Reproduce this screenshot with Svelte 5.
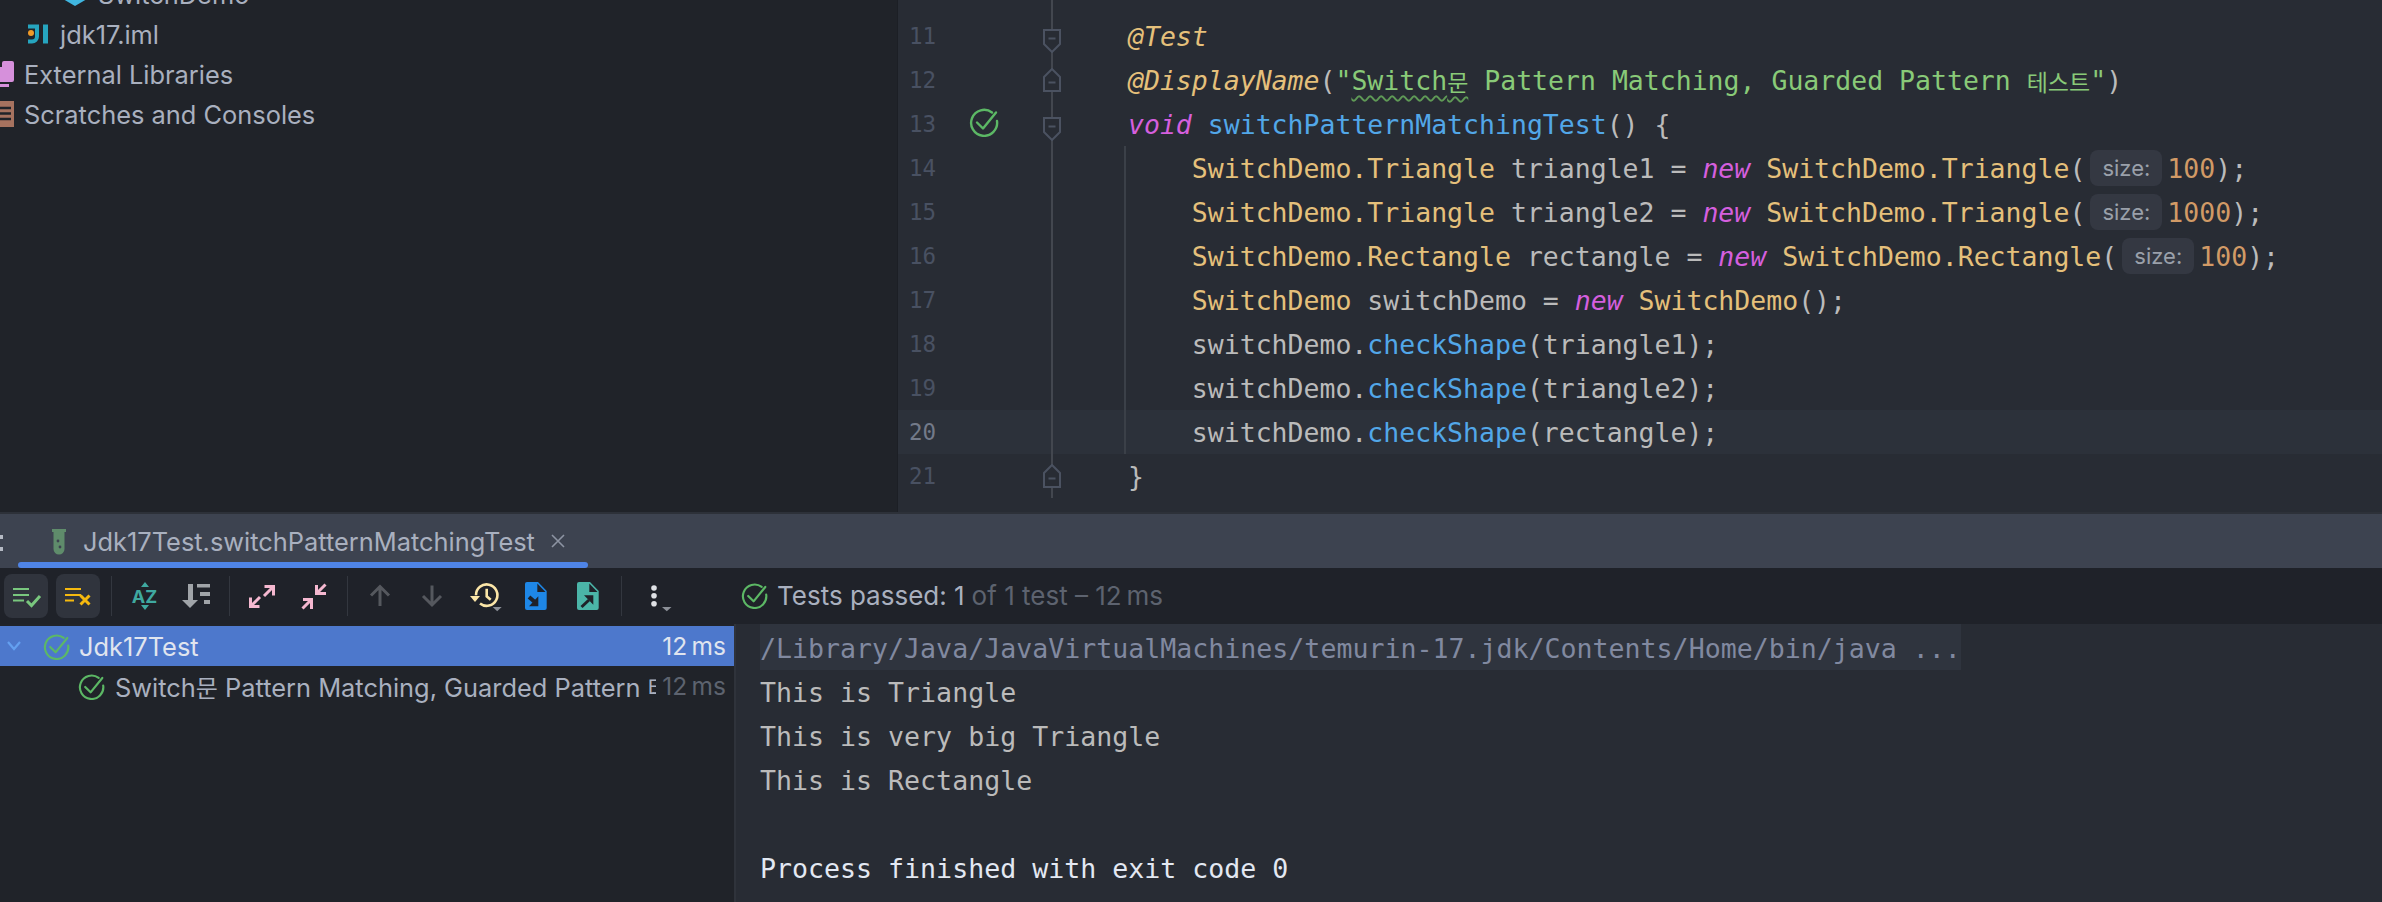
<script>
  const lines = [
    { n: 10, t: [] },
    { n: 11, fold: 'down', t: [['@Test', 'ann']] },
    { n: 12, fold: 'up', t: [['@DisplayName', 'ann'], ['(', 'pl'], ['"', 'str'], ['Switch', 'str wavy'], ['문', 'str wavy ko'], [' Pattern Matching, Guarded Pattern ', 'str'], ['테스트', 'str ko'], ['"', 'str'], [')', 'pl']] },
    { n: 13, fold: 'down', run: true, t: [['void', 'kw'], [' ', 'pl'], ['switchPatternMatchingTest', 'fn'], ['() {', 'pl']] },
    { n: 14, guide: true, t: [['    ', 'pl'], ['SwitchDemo.Triangle', 'cl'], [' triangle1 = ', 'pl'], ['new', 'kw'], [' ', 'pl'], ['SwitchDemo.Triangle', 'cl'], ['(', 'pl']], hint: '100' },
    { n: 15, guide: true, t: [['    ', 'pl'], ['SwitchDemo.Triangle', 'cl'], [' triangle2 = ', 'pl'], ['new', 'kw'], [' ', 'pl'], ['SwitchDemo.Triangle', 'cl'], ['(', 'pl']], hint: '1000' },
    { n: 16, guide: true, t: [['    ', 'pl'], ['SwitchDemo.Rectangle', 'cl'], [' rectangle = ', 'pl'], ['new', 'kw'], [' ', 'pl'], ['SwitchDemo.Rectangle', 'cl'], ['(', 'pl']], hint: '100' },
    { n: 17, guide: true, t: [['    ', 'pl'], ['SwitchDemo', 'cl'], [' switchDemo = ', 'pl'], ['new', 'kw'], [' ', 'pl'], ['SwitchDemo', 'cl'], ['();', 'pl']] },
    { n: 18, guide: true, t: [['    switchDemo.', 'pl'], ['checkShape', 'fn'], ['(triangle1);', 'pl']] },
    { n: 19, guide: true, t: [['    switchDemo.', 'pl'], ['checkShape', 'fn'], ['(triangle2);', 'pl']] },
    { n: 20, guide: true, current: true, t: [['    switchDemo.', 'pl'], ['checkShape', 'fn'], ['(rectangle);', 'pl']] },
    { n: 21, fold: 'up', t: [['}', 'pl']] }
  ];
</script>

{#snippet passed(size)}
  <svg class="passed" width={size} height={size} viewBox="0 0 30 30" fill="none" stroke="#5cb865" stroke-width="2.4" stroke-linecap="round" stroke-linejoin="round">
    <path d="M23 5.500A13 13 0 1 0 28 14" />
    <path d="M8 15.500l6 6L27 5.500" />
  </svg>
{/snippet}

{#snippet doc(fill)}
  <path d="M13 8h11l8.700 9v17a2 2 0 0 1-2 2H13a2 2 0 0 1-2-2V10a2 2 0 0 1 2-2z" fill={fill} />
  <path d="M23.300 9.500V18H31.500z" fill="#1f2229" />
{/snippet}

<div class="app">
  <div class="top">
    <aside class="project">
      <div class="tree">
        <div class="node l2">
          <svg width="26" height="26" viewBox="0 0 26 26"><path d="M13 1L25 8v10l-12 7L1 18V8z" fill="#40b6e0" /></svg>
          <span>SwitchDemo</span>
        </div>
        <div class="node l1">
          <svg width="22" height="22" viewBox="0 0 22 22" fill="none"><path d="M1 1.500h11v12a7 7 0 0 1-7 7H1v-4h4a3 3 0 0 0 3-3V5.500H1z" fill="#26a5bf" /><path d="M16 1.500h5v19h-5z" fill="#26a5bf" /><circle cx="4" cy="10" r="3" fill="#f09a27" /></svg>
          <span>jdk17.iml</span>
        </div>
        <div class="node l0">
          <svg width="14" height="28" viewBox="0 0 14 28"><path d="M-6 7h8V3a2 2 0 0 1 2-2h8a2 2 0 0 1 2 2v17a2 2 0 0 1-2 2H-6z" fill="#d690db" /><path d="M-2 24h11v3H-2z" fill="#d690db" /></svg>
          <span>External Libraries</span>
        </div>
        <div class="node l0">
          <svg width="14" height="26" viewBox="0 0 14 26"><path d="M-4 0h18v26H-4z" fill="#a6725f" /><path d="M0 7h11M0 12.500h11M0 18h11" stroke="#202329" stroke-width="2.500" /></svg>
          <span>Scratches and Consoles</span>
        </div>
      </div>
    </aside>

    <main class="editor">
      <div class="rows">
        {#each lines as line}
          <div class="row" class:current={line.current}>
            <div class="num">{line.n}</div>
            <div class="mark">{#if line.run}{@render passed(30)}{/if}</div>
            <div class="fold">
              {#if line.fold}
                <svg class={line.fold} width="18" height="24" viewBox="0 0 18 24" fill="#282c34" stroke="#4b5261" stroke-width="2">
                  <path d="M1 1h16v14l-8 8-8-8z" />
                  <path d="M5.500 9.500h7" />
                </svg>
              {/if}
            </div>
            <div class="code" class:guide={line.guide}>{#each line.t as tok}<span class={tok[1]}>{tok[0]}</span>{/each}{#if line.hint}<span class="hint">size:</span><span class="numlit">{line.hint}</span><span class="pl">);</span>{/if}</div>
          </div>
        {/each}
      </div>
    </main>
  </div>

  <div class="run-tabs">
    <div class="more"><i></i><i></i></div>
    <div class="tab">
      <svg width="14" height="27" viewBox="0 0 14 27"><path d="M0 1h14v3h-1.500v17a5.500 5.500 0 0 1-11 0V4H0z" fill="#5f8c6b" /><circle cx="6" cy="13" r="1.400" fill="#3d4350" /><circle cx="8" cy="19" r="1.400" fill="#3d4350" /></svg>
      <span class="tab-title">Jdk17Test.switchPatternMatchingTest</span>
      <svg width="14" height="14" viewBox="0 0 14 14" stroke="#8d94a3" stroke-width="1.600"><path d="M1 1l12 12M13 1L1 13" /></svg>
    </div>
  </div>

  <div class="toolbar">
    <button class="tb on" aria-label="Show passed">
      <svg width="44" height="44" viewBox="0 0 44 44" fill="none" stroke="#79c77e" stroke-width="2.200"><path d="M9 15h16M9 21h16M9 26.500h11" /><path d="M23 27l4.500 4.500L36 22" stroke-width="3" /></svg>
    </button>
    <button class="tb on" aria-label="Show ignored">
      <svg width="44" height="44" viewBox="0 0 44 44" fill="none" stroke="#f5b90f" stroke-width="2.200"><path d="M9 15h16M9 21h16M9 26.500h9" /><path d="M24.500 21.500l9 9M33.500 21.500l-9 9" stroke-width="3" /></svg>
    </button>
    <span class="sep"></span>
    <button class="tb" aria-label="Sort alphabetically">
      <svg width="44" height="44" viewBox="0 0 44 44"><path d="M19 13l4-5 4 5zM19 31h8l-4 5z" fill="#3fa9a0" /><text x="22.500" y="29" text-anchor="middle" class="az">AZ</text></svg>
    </button>
    <button class="tb" aria-label="Sort by duration">
      <svg width="44" height="44" viewBox="0 0 44 44" fill="#a0a4a8"><path d="M14 10h5v16h5l-8 8-8-8h6z" /><path d="M23 10h13v3.500H23zM26 18h10v4H26zM30 26h6v4h-6z" /></svg>
    </button>
    <span class="sep"></span>
    <button class="tb" aria-label="Expand all">
      <svg width="44" height="44" viewBox="0 0 44 44" fill="none" stroke="#f5b8d0" stroke-width="3"><path d="M24.500 12.500h9v9M33.500 12.500L24 22M19.500 32.500h-9v-9M10.500 32.500L20 23" /></svg>
    </button>
    <button class="tb" aria-label="Collapse all">
      <svg width="44" height="44" viewBox="0 0 44 44" fill="none" stroke="#f5b8d0" stroke-width="3"><path d="M24.500 11v8.500H34M24.500 19.500l9-9M11 25.500h8.500V35M19.500 25.500l-9 9" /></svg>
    </button>
    <span class="sep"></span>
    <button class="tb" aria-label="Previous">
      <svg width="44" height="44" viewBox="0 0 44 44" fill="none" stroke="#55585e" stroke-width="3"><path d="M22 32V12.500M13 21.500l9-9 9 9" /></svg>
    </button>
    <button class="tb" aria-label="Next">
      <svg width="44" height="44" viewBox="0 0 44 44" fill="none" stroke="#55585e" stroke-width="3"><path d="M22 11.500V31M13 22l9 9 9-9" /></svg>
    </button>
    <button class="tb" aria-label="History">
      <svg width="44" height="44" viewBox="0 0 44 44" fill="none" stroke="#fbe6a8" stroke-width="2.600"><path d="M14 21.300A10.700 10.700 0 1 1 18 29.500" /><path d="M24.700 14.700v7.600l4 3.400" /><path d="M8 22h10l-5 6z" fill="#fbe6a8" stroke="none" /><path d="M30.700 33h9l-4.500 4.300z" fill="#8c9098" stroke="none" /></svg>
    </button>
    <button class="tb" aria-label="Import tests">
      <svg width="44" height="44" viewBox="0 0 44 44">
        {@render doc('#1e87e6')}
        <path d="M24.300 22.300v10H15z" fill="#1f2229" /><path d="M15 23l7 6" stroke="#1f2229" stroke-width="4" />
      </svg>
    </button>
    <button class="tb" aria-label="Export tests">
      <svg width="44" height="44" viewBox="0 0 44 44">
        {@render doc('#4bb5a8')}
        <path d="M18 21.300h9.300v9.400z" fill="#1f2229" /><path d="M23 26l-7.500 7" stroke="#1f2229" stroke-width="3" />
      </svg>
    </button>
    <span class="sep"></span>
    <button class="tb" aria-label="More">
      <svg width="44" height="44" viewBox="0 0 44 44" fill="#dfe1e5"><circle cx="22" cy="14" r="2.800" /><circle cx="22" cy="21.700" r="2.800" /><circle cx="22" cy="29.700" r="2.800" /><path d="M30 33h9.500l-4.700 4.300z" fill="#8c9098" /></svg>
    </button>
    <div class="summary">
      {@render passed(27)}
      <span class="strong">Tests passed: 1</span><span class="dim">of 1 test – 12&thinsp;ms</span>
    </div>
  </div>

  <div class="results">
    <section class="tests">
      <div class="test selected">
        <svg class="chev" width="14" height="10" viewBox="0 0 14 10" fill="none" stroke="#64a0f0" stroke-width="2.200"><path d="M1 1l6 7 6-7" /></svg>
        {@render passed(27)}
        <span class="name">Jdk17Test</span>
        <span class="time">12&thinsp;ms</span>
      </div>
      <div class="test child">
        {@render passed(27)}
        <span class="name">Switch<span class="ko-ui">문</span> Pattern Matching, Guarded Pattern <span class="ko-ui">테스트</span>()</span>
        <span class="time muted">12&thinsp;ms</span>
      </div>
    </section>
    <section class="console">
      <div class="out cmd">/Library/Java/JavaVirtualMachines/temurin-17.jdk/Contents/Home/bin/java ...</div>
      <div class="out">This is Triangle</div>
      <div class="out">This is very big Triangle</div>
      <div class="out">This is Rectangle</div>
      <div class="out">&nbsp;</div>
      <div class="out exit">Process finished with exit code 0</div>
    </section>
  </div>
</div>

<style>
  :global(body) { margin: 0; background: #202329; }
  .app { width: 2382px; height: 902px; display: flex; flex-direction: column; overflow: hidden; font-family: Inter, "Noto Sans CJK KR", sans-serif; color: #a9b0bf; }
  svg { display: block; flex: none; overflow: hidden; }
  .top { height: 512px; display: flex; flex: none; overflow: hidden; }
  .project { width: 897px; flex: none; background: #202329; border-right: 1px solid #1c1f25; overflow: hidden; }
  .tree { margin-top: -26px; }
  .node { height: 40px; display: flex; align-items: center; font-size: 25.400px; white-space: nowrap; }
  .l0 { gap: 10px; }
  .l1 { padding-left: 27px; gap: 11px; }
  .l2 { padding-left: 62px; gap: 10px; }

  .editor { flex: 1; min-width: 0; background: #282c34; overflow: hidden; }
  .rows { margin-top: -30px; }
  .row { height: 44px; display: grid; grid-template-columns: 38px 96px 40px 1fr; align-items: center; }
  .row.current { background: #2c313a; }
  .num { font: 22.500px/44px "DejaVu Sans Mono", monospace; color: #495162; text-align: right; }
  .current .num { color: #737a89; }
  .mark { height: 44px; display: flex; justify-content: center; align-items: center; }
  .mark .passed { margin-top: -4px; }
  .fold { height: 44px; position: relative; display: flex; justify-content: center; align-items: center; }
  .fold::before { content: ""; position: absolute; left: 19px; top: 0; bottom: 0; width: 2px; background: #43474f; }
  .fold svg { position: relative; }
  .fold .down { margin-top: 9px; }
  .fold .up { transform: rotate(180deg); }
  .code { position: relative; height: 44px; box-sizing: border-box; padding: 2px 0 0 56px; font: 26.500px/42px "DejaVu Sans Mono", "Noto Sans CJK KR", monospace; white-space: pre; display: flex; align-items: center; }
  .code.guide::before { content: ""; position: absolute; left: 52px; top: 0; bottom: 0; width: 2px; background: #3b4048; }
  .pl { color: #bbbbbb; }
  .ann { color: #e5c07b; font-style: italic; }
  .cl { color: #e5c07b; }
  .str { color: #89ca78; }
  .kw { color: #d55fde; font-style: italic; }
  .fn { color: #52a7e8; }
  .numlit { color: #d19a66; }
  .wavy { text-decoration: underline wavy #5f9a56 1.500px; text-underline-offset: 5px; }
  .ko { font-size: 23px; font-family: "Noto Sans CJK KR", sans-serif; }
  .hint { width: 72px; height: 36px; margin: -2px 5px 0; flex: none; border-radius: 8px; background: #343842; color: #9aa0aa; font: 22px/36px Inter, sans-serif; text-align: center; }

  .run-tabs { height: 56px; flex: none; box-sizing: border-box; border-top: 2px solid #2d3139; background: #3d4350; display: flex; }
  .more { width: 18px; flex: none; display: flex; flex-direction: column; gap: 8px; padding-top: 21px; box-sizing: border-box; }
  .more i { width: 3px; height: 4px; background: #b5bac4; display: block; }
  .tab { width: 570px; box-sizing: border-box; display: flex; align-items: center; padding: 0 0 0 34px; position: relative; }
  .tab::after { content: ""; position: absolute; left: 0; right: 0; bottom: 0; height: 6px; border-radius: 3px; background: #4f84e6; }
  .tab-title { margin: 0 16px 0 17px; font-size: 25.400px; color: #a9b0bf; white-space: nowrap; }

  .toolbar { height: 56px; flex: none; box-sizing: border-box; background: #1f2229; display: flex; align-items: center; gap: 8px; padding: 0 0 1px 4px; }
  .tb { width: 44px; height: 44px; flex: none; padding: 0; border: 0; border-radius: 8px; background: none; display: flex; align-items: center; justify-content: center; }
  .tb.on { background: #30343d; }
  .sep { width: 1px; height: 40px; margin: 0 2.500px; background: #33373f; flex: none; }
  .az { font: bold 18px Inter, sans-serif; fill: #3fa9a0; }
  .summary { margin-left: 57px; display: flex; align-items: center; font-size: 26px; white-space: nowrap; }
  .summary .passed { margin-right: 9px; }
  .strong { color: #a9b0bf; }
  .dim { color: #5d636f; margin-left: 7px; }

  .results { flex: 1; min-height: 0; display: flex; }
  .tests { width: 734px; flex: none; background: #202329; box-sizing: border-box; padding-top: 2px; }
  .test { height: 40px; display: flex; align-items: center; padding-right: 8px; font-size: 25.400px; white-space: nowrap; }
  .selected { background: #4d78cc; color: #e0e5ef; padding-left: 7px; }
  .selected .passed { margin-left: 22px; margin-right: 9px; }
  .child { padding-left: 78px; }
  .child .passed { margin-right: 10px; }
  .name { flex: 1; min-width: 0; overflow: hidden; }
  .ko-ui { font-family: "Noto Sans CJK KR", sans-serif; font-size: 24px; }
  .time { margin-left: 6px; font-size: 24.500px; }
  .muted { color: #5d636f; }
  .console { flex: 1; background: #282c34; border-left: 2px solid #2f333b; padding-left: 24px; font: 26.600px/44px "DejaVu Sans Mono", monospace; color: #bbbbbb; }
  .out { height: 44px; white-space: pre; position: relative; top: 1px; }
  .cmd { width: fit-content; height: 46px; padding-top: 2px; box-sizing: border-box; background: #2f343e; color: #8189a0; top: 0; line-height: 46px; }
  .exit { color: #e3e8f2; }
</style>
